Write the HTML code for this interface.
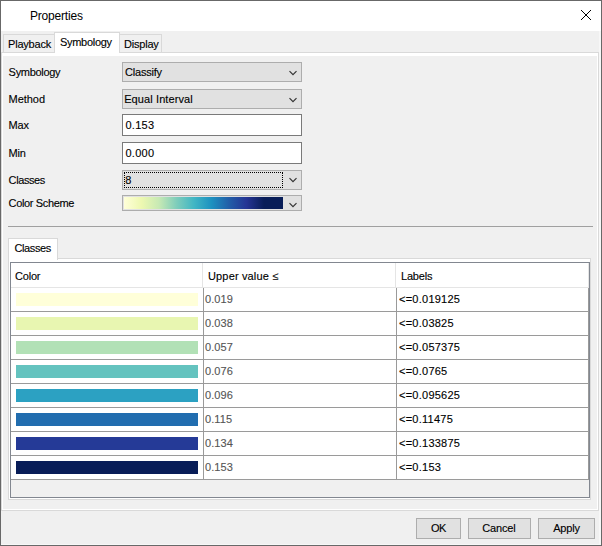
<!DOCTYPE html>
<html><head><meta charset="utf-8">
<style>
*{margin:0;padding:0;box-sizing:border-box}
html,body{width:602px;height:546px;overflow:hidden;background:#f0f0f0}
body{position:relative;font-family:"Liberation Sans",sans-serif;font-size:11px;color:#000}
.a{position:absolute}
.t{position:absolute;white-space:nowrap;line-height:12px;letter-spacing:-0.2px;-webkit-text-stroke:0.12px currentColor}
.win{left:0;top:0;width:602px;height:546px;border:1px solid #686868}
.title{left:1px;top:1px;width:600px;height:30px;background:#fff}
.pane{left:1px;top:52px;width:598px;height:459px;border:1px solid #d9d9d9;background:#fff}
.page{left:3px;top:56px;width:594px;height:453px;background:#f0f0f0}
.tab{border:1px solid #d9d9d9;border-bottom:none;background:#f0f0f0}
.tabsel{border:1px solid #d9d9d9;border-bottom:none;background:#fff}
.combo{border:1px solid #adadad;background:#e1e1e1}
.tb{border:1px solid #7a7a7a;background:#fff}
.btn{border:1px solid #adadad;background:#e1e1e1}
.chev{position:absolute;width:10px;height:7px}
.hl{background:#e5e5e5}
.gl{background:#9a9a9a}
.bar{position:absolute;left:16px;width:182px;height:13px}
.val{color:#555;letter-spacing:0.1px}
.lab{letter-spacing:0.25px}
</style></head><body>
<div class="a win"></div>
<div class="a title"></div>
<div class="t" style="left:30px;top:10px;font-size:12px;-webkit-text-stroke:0">Properties</div>
<svg class="a" style="left:580px;top:9px" width="12" height="12" viewBox="0 0 12 12"><path d="M1 1L11 11M11 1L1 11" stroke="#000" stroke-width="1" fill="none"/></svg>

<!-- tab pane -->
<div class="a" style="left:599px;top:31px;width:2px;height:514px;background:#f7f7f7"></div>
<div class="a" style="left:1px;top:544px;width:600px;height:1px;background:#f7f7f7"></div>
<div class="a pane"></div>
<div class="a page"></div>
<div class="a tab" style="left:3px;top:34px;width:52px;height:18px"></div>
<div class="a tab" style="left:119px;top:34px;width:43px;height:18px"></div>
<div class="a tabsel" style="left:54px;top:32px;width:66px;height:21px"></div>
<div class="a" style="left:55px;top:52px;width:64px;height:4px;background:#fff"></div>
<div class="t" style="left:8px;top:38px">Playback</div>
<div class="t" style="left:60px;top:36px;letter-spacing:-0.3px">Symbology</div>
<div class="t" style="left:124px;top:38px">Display</div>

<!-- form labels -->
<div class="t" style="left:8.6px;top:66px;letter-spacing:-0.3px">Symbology</div>
<div class="t" style="left:8.6px;top:93px;letter-spacing:-0.05px">Method</div>
<div class="t" style="left:8.6px;top:119px">Max</div>
<div class="t" style="left:8.6px;top:147px">Min</div>
<div class="t" style="left:8.6px;top:174px;letter-spacing:-0.4px">Classes</div>
<div class="t" style="left:8.6px;top:197px;letter-spacing:-0.35px">Color Scheme</div>

<!-- combos -->
<div class="a combo" style="left:122px;top:62px;width:180px;height:20px"></div>
<div class="t" style="left:125px;top:66px">Classify</div>
<svg class="chev" style="left:288px;top:70px" viewBox="0 0 10 7"><path d="M1.5 1.1L5 4.7L8.5 1.1" stroke="#333" stroke-width="1.15" fill="none"/></svg>

<div class="a combo" style="left:122px;top:89px;width:180px;height:20px"></div>
<div class="t" style="left:124.2px;top:93px;letter-spacing:0.1px">Equal Interval</div>
<svg class="chev" style="left:288px;top:97px" viewBox="0 0 10 7"><path d="M1.5 1.1L5 4.7L8.5 1.1" stroke="#333" stroke-width="1.15" fill="none"/></svg>

<div class="a tb" style="left:122px;top:114px;width:180px;height:22px"></div>
<div class="t" style="left:125.5px;top:119px;letter-spacing:0.25px">0.153</div>

<div class="a tb" style="left:122px;top:142px;width:180px;height:22px"></div>
<div class="t" style="left:125.5px;top:147px;letter-spacing:0.25px">0.000</div>

<div class="a combo" style="left:122px;top:170px;width:180px;height:20px"></div>
<div class="a" style="left:124px;top:172px;width:159px;height:16px;border:1px dotted #000"></div>
<div class="t" style="left:125.3px;top:174px">8</div>
<svg class="chev" style="left:288px;top:177px" viewBox="0 0 10 7"><path d="M1.5 1.1L5 4.7L8.5 1.1" stroke="#333" stroke-width="1.15" fill="none"/></svg>

<div class="a combo" style="left:122px;top:195px;width:180px;height:16px"></div>
<div class="a" style="left:124px;top:197px;width:159px;height:12px;background:linear-gradient(to right,#ffffd9 0px,#edf8b1 17.5px,#c7e9b4 35px,#7fcdbb 52.5px,#41b6c4 70px,#1d91c0 87.5px,#225ea8 105px,#253494 122.5px,#081d58 140px,#081d58 159px)"></div>
<svg class="chev" style="left:288px;top:202px" viewBox="0 0 10 7"><path d="M1.5 1.1L5 4.7L8.5 1.1" stroke="#333" stroke-width="1.15" fill="none"/></svg>

<!-- separator -->
<div class="a" style="left:8px;top:226px;width:585px;height:1px;background:#a0a0a0"></div>

<!-- inner tab -->
<div class="a" style="left:8px;top:258px;width:583px;height:242px;border:1px solid #d9d9d9;background:#fff"></div>
<div class="a tabsel" style="left:8px;top:238px;width:50px;height:22px"></div>
<div class="t" style="left:14.5px;top:242px;letter-spacing:-0.4px">Classes</div>

<!-- table frame -->
<div class="a" style="left:10px;top:262px;width:580px;height:236px;border:1px solid #828790;background:#f0f0f0"></div>
<div class="a" style="left:11px;top:263px;width:578px;height:217px;background:#fff"></div>
<!-- header -->
<div class="a hl" style="left:11px;top:287px;width:578px;height:1px"></div>
<div class="a hl" style="left:202px;top:263px;width:1px;height:24px"></div>
<div class="a hl" style="left:395px;top:263px;width:1px;height:24px"></div>
<div class="a hl" style="left:588px;top:263px;width:1px;height:24px"></div>
<div class="t" style="left:15px;top:270px">Color</div>
<div class="t" style="left:208px;top:270px;letter-spacing:0.15px">Upper value ≤</div>
<div class="t" style="left:401px;top:270px">Labels</div>

<div class="a gl" style="left:203px;top:288px;width:1px;height:192px"></div>
<div class="a gl" style="left:396px;top:288px;width:1px;height:192px"></div>
<div class="a gl" style="left:588px;top:288px;width:1px;height:192px"></div>
<div class="a gl" style="left:11px;top:311px;width:578px;height:1px"></div>
<div class="bar" style="top:293px;background:#ffffd9"></div>
<div class="t val" style="left:205px;top:293px">0.019</div>
<div class="t lab" style="left:399px;top:293px">&lt;=0.019125</div>
<div class="a gl" style="left:11px;top:335px;width:578px;height:1px"></div>
<div class="bar" style="top:317px;background:#e8f6b1"></div>
<div class="t val" style="left:205px;top:317px">0.038</div>
<div class="t lab" style="left:399px;top:317px">&lt;=0.03825</div>
<div class="a gl" style="left:11px;top:359px;width:578px;height:1px"></div>
<div class="bar" style="top:341px;background:#b2e1b6"></div>
<div class="t val" style="left:205px;top:341px">0.057</div>
<div class="t lab" style="left:399px;top:341px">&lt;=0.057375</div>
<div class="a gl" style="left:11px;top:383px;width:578px;height:1px"></div>
<div class="bar" style="top:365px;background:#64c3bf"></div>
<div class="t val" style="left:205px;top:365px">0.076</div>
<div class="t lab" style="left:399px;top:365px">&lt;=0.0765</div>
<div class="a gl" style="left:11px;top:407px;width:578px;height:1px"></div>
<div class="bar" style="top:389px;background:#2ca1c2"></div>
<div class="t val" style="left:205px;top:389px">0.096</div>
<div class="t lab" style="left:399px;top:389px">&lt;=0.095625</div>
<div class="a gl" style="left:11px;top:431px;width:578px;height:1px"></div>
<div class="bar" style="top:413px;background:#216daf"></div>
<div class="t val" style="left:205px;top:413px">0.115</div>
<div class="t lab" style="left:399px;top:413px">&lt;=0.11475</div>
<div class="a gl" style="left:11px;top:455px;width:578px;height:1px"></div>
<div class="bar" style="top:437px;background:#253a97"></div>
<div class="t val" style="left:205px;top:437px">0.134</div>
<div class="t lab" style="left:399px;top:437px">&lt;=0.133875</div>
<div class="a gl" style="left:11px;top:479px;width:578px;height:1px"></div>
<div class="bar" style="top:461px;background:#081d58"></div>
<div class="t val" style="left:205px;top:461px">0.153</div>
<div class="t lab" style="left:399px;top:461px">&lt;=0.153</div>
<div class="a btn" style="left:416px;top:518px;width:45px;height:21px"></div>
<div class="t" style="left:416px;top:522px;width:45px;text-align:center"><span style="letter-spacing:-0.5px">OK</span></div>
<div class="a btn" style="left:468px;top:518px;width:63px;height:21px"></div>
<div class="t" style="left:467.4px;top:522px;width:63px;text-align:center"><span style="letter-spacing:-0.15px">Cancel</span></div>
<div class="a btn" style="left:538px;top:518px;width:57px;height:21px"></div>
<div class="t" style="left:538px;top:522px;width:57px;text-align:center">Apply</div>
</body></html>
